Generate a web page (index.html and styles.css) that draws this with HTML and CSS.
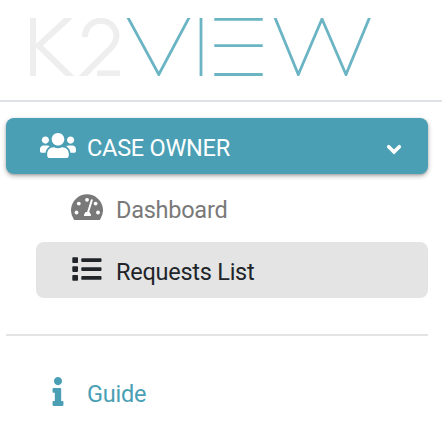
FILE: index.html
```html
<!DOCTYPE html>
<html lang="en">
<head>
<meta charset="utf-8">
<title>K2View</title>
<link rel="stylesheet" href="styles.css">
</head>
<body>
<header class="brand">
  <svg class="logo" viewBox="30 18 342 58" role="img" aria-label="K2VIEW">
    <g class="logo-light">
      <path d="M33 18V76M73 14L38.500 45.500L73 79"/>
      <path d="M85 37V35.500A15.800 15.800 0 0 1 116.500 35C116.500 41 114.500 44.500 110 49L80 79M97 73.500H120"/>
    </g>
    <g class="logo-teal">
      <path d="M126 14L158.800 74.500L191 14M201 18V76M214.300 19.400H262.700M214.300 63.700"/>
      <path d="M214.300 45.700H262.700M214.300 74.500H262.700M273.500 14L298.300 74.500L322 19L346 74.500L371 14"/>
    </g>
  </svg>
</header>
<nav class="menu">
  <a class="item owner">
    <svg class="users" viewBox="0 0 640 512"><path d="M96 224c35.300 0 64-28.700 64-64s-28.700-64-64-64-64 28.700-64 64 28.700 64 64 64zm448 0c35.300 0 64-28.700 64-64s-28.700-64-64-64-64 28.700-64 64 28.700 64 64 64zm32 32h-64c-17.600 0-33.500 7.100-45.100 18.600 40.300 22.100 68.900 62 75.100 109.400h66c17.700 0 32-14.300 32-32v-32c0-35.300-28.700-64-64-64zm-256 0c61.900 0 112-50.100 112-112S381.900 32 320 32 208 82.100 208 144s50.100 112 112 112zm76.800 32h-8.300c-20.800 10-43.900 16-68.500 16s-47.600-6-68.500-16h-8.300C179.600 288 128 339.600 128 403.200V432c0 26.500 21.500 48 48 48h288c26.500 0 48-21.500 48-48v-28.800c0-63.600-51.600-115.200-115.200-115.200zm-223.700-13.400C161.500 263.100 145.600 256 128 256H64c-35.300 0-64 28.700-64 64v32c0 17.700 14.300 32 32 32h65.900c6.300-47.400 34.900-87.300 75.200-109.400z"/></svg>
    <span class="label">CASE OWNER</span>
    <svg class="chevron" viewBox="0 0 16 11"><path d="M2.700 2.700L8 8L13.300 2.700"/></svg>
  </a>
  <a class="item sub">
    <svg class="gauge" viewBox="0 0 32 26">
      <path d="M3 25.700A16 16 0 1 1 29 25.700Q28.600 26 28 26H4Q3.400 26 3 25.700Z"/>
      <g class="cutout">
        <circle cx="7.800" cy="9.600" r="1.900"/><circle cx="16" cy="5.800" r="1.900"/><circle cx="24.600" cy="9.600" r="1.900"/>
        <circle cx="5.500" cy="18.500" r="1.900"/><circle cx="27" cy="18.500" r="1.900"/>
        <path class="needle" d="M20.800 6.300L16.800 19"/>
        <path d="M14.600 18H18.400L19.900 20.500V22H13V20.500Z"/>
      </g>
    </svg>
    <span class="label">Dashboard</span>
  </a>
  <a class="item sub active">
    <svg class="list" viewBox="0 0 30 24">
      <rect x=".3" y=".3" width="5.700" height="5.700" rx=".8"/><rect x=".3" y="9.200" width="5.700" height="5.700" rx=".8"/><rect x=".3" y="18.100" width="5.700" height="5.700" rx=".8"/>
      <rect x="9.300" y="1.300" width="20.200" height="3.700" rx=".9"/><rect x="9.300" y="10.200" width="20.200" height="3.700" rx=".9"/><rect x="9.300" y="19.100" width="20.200" height="3.700" rx=".9"/>
    </svg>
    <span class="label">Requests List</span>
  </a>
  <hr class="divider">
  <a class="item guide">
    <svg class="info" viewBox="0 0 192 512"><path d="M20 424.229h20V279.771H20c-11.046 0-20-8.954-20-20V212c0-11.046 8.954-20 20-20h112c11.046 0 20 8.954 20 20v212.229h20c11.046 0 20 8.954 20 20V492c0 11.046-8.954 20-20 20H20c-11.046 0-20-8.954-20-20v-47.771c0-11.046 8.954-20 20-20zM96 0C56.235 0 24 32.235 24 72s32.235 72 72 72 72-32.235 72-72S135.764 0 96 0z"/></svg>
    <span class="label">Guide</span>
  </a>
</nav>
</body>
</html>
```
FILE: styles.css
```css
* { box-sizing: border-box; }
body {
  margin: 0;
  background: #fff;
  font-family: Roboto, sans-serif;
  font-size: 23.5px;
  letter-spacing: -.25px;
  line-height: 36px;
  overflow: hidden;
}
svg { display: block; flex: none; fill: currentColor; }
.brand { height: 102px; padding: 18px 0 0 30px; border-bottom: 2px solid #dee2e6; }
.logo { width: 342px; height: 58px; fill: none; }
.logo-light { stroke: #eee; stroke-width: 6; }
.logo-teal { stroke: #6ab4c4; stroke-width: 2.800; }
.menu { padding: 16px 14px 0 6px; }
.item { display: flex; align-items: center; height: 56px; border-radius: 8px; white-space: nowrap; }
.label { padding-top: 3px; }
.owner {
  padding: 0 26px 0 34px;
  background: #4a9fb5;
  color: #fff;
  box-shadow: 0 2px 5px rgba(0, 0, 0, .3), 0 1px 2px rgba(0, 0, 0, .15);
}
.users { width: 36px; height: 29px; margin: -2px 11px 0 0; }
.chevron { width: 16px; height: 11px; margin: 6px 0 0 auto; fill: none; stroke: #fff; stroke-width: 3.600; stroke-linecap: round; }
.sub { margin: 6px 0 0 30px; padding-left: 35px; color: #797979; }
.sub.active { background: #e4e4e4; color: #212529; }
.gauge { width: 32px; height: 26px; margin: -2px 13px 0 0; }
.cutout { fill: #fff; }
.needle { stroke: #fff; stroke-width: 2; stroke-linecap: round; }
.list { width: 30px; height: 24px; margin: -2px 14px 0 1px; }
.divider { height: 2px; margin: 36px 0 28px; border: 0; background: #e4e4e4; }
.guide { padding-left: 46px; color: #4a9fb5; }
.info { width: 12px; height: 29px; margin: -1px 23px 0 0; }
```
